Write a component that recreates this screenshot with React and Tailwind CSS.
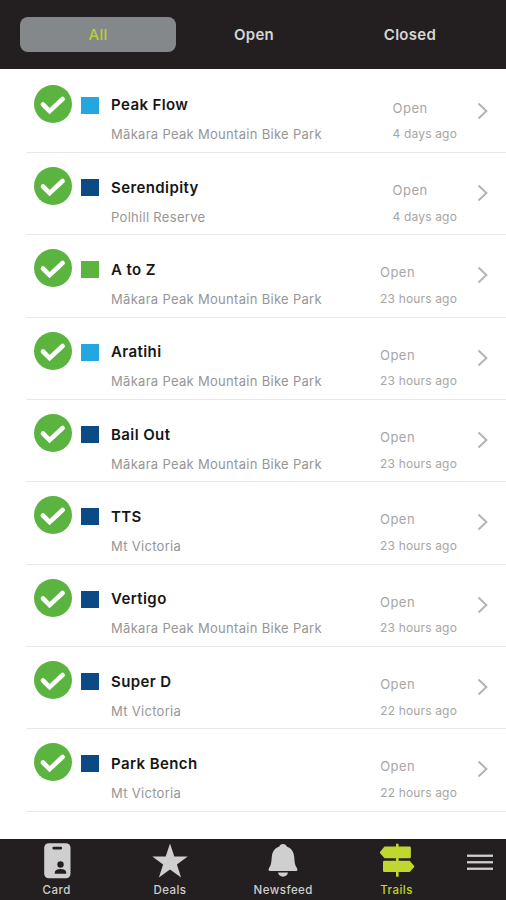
import React, { useState } from 'react'

const TABS = ['All', 'Open', 'Closed']

const GRADES = {
  easy: 'bg-[#5bb440]',
  intermediate: 'bg-[#22a7e0]',
  advanced: 'bg-[#0c4a86]',
}

const MAKARA = 'Mākara Peak Mountain Bike Park'

const TRAILS = [
  { name: 'Peak Flow',   park: MAKARA,            grade: 'intermediate', updated: '4 days ago' },
  { name: 'Serendipity', park: 'Polhill Reserve', grade: 'advanced',     updated: '4 days ago' },
  { name: 'A to Z',      park: MAKARA,            grade: 'easy',         updated: '23 hours ago' },
  { name: 'Aratihi',     park: MAKARA,            grade: 'intermediate', updated: '23 hours ago' },
  { name: 'Bail Out',    park: MAKARA,            grade: 'advanced',     updated: '23 hours ago' },
  { name: 'TTS',         park: 'Mt Victoria',     grade: 'advanced',     updated: '23 hours ago' },
  { name: 'Vertigo',     park: MAKARA,            grade: 'advanced',     updated: '23 hours ago' },
  { name: 'Super D',     park: 'Mt Victoria',     grade: 'advanced',     updated: '22 hours ago' },
  { name: 'Park Bench',  park: 'Mt Victoria',     grade: 'advanced',     updated: '22 hours ago' },
]

function CheckBadge() {
  return (
    <svg className="mt-[14px] h-[38px] w-[38px] shrink-0" viewBox="0 0 38 38">
      <circle cx="19" cy="19" r="19" fill="#5bb440" />
      <path d="M9 19.500l6.600 6.600L28.600 14" fill="none" stroke="#fff" strokeWidth="4.600" strokeLinecap="round" />
    </svg>
  )
}

function Chevron() {
  return (
    <svg className="mt-[31px] h-[18px] w-[12px] shrink-0" viewBox="0 0 12 18">
      <path d="M1.500 1.500L9.400 9L1.500 16.500" fill="none" stroke="#b4b4b6" strokeWidth="2" />
    </svg>
  )
}

function CardIcon() {
  return (
    <svg className="h-9 w-9" viewBox="0 0 36 36" fill="currentColor">
      <rect x="5.200" y="0.300" width="26.300" height="35" rx="4.500" />
      <rect x="13.500" y="3.800" width="9.500" height="2.600" rx="0.800" fill="#231f20" />
      <circle cx="21.500" cy="21.500" r="3.200" fill="#231f20" />
      <path d="M15.800 30.700v-1.200c0-2.200 2-3.600 5.700-3.600s5.700 1.400 5.700 3.600v1.200z" fill="#231f20" />
    </svg>
  )
}

function StarIcon() {
  return (
    <svg className="h-9 w-9" viewBox="0 0 36 36" fill="currentColor">
      <path d="M18 0.500l4.300 13.100h13.400L24.900 21.600l4.200 13L18 26.600l-11.100 8 4.200-13L0.300 13.600h13.400z" />
    </svg>
  )
}

function BellIcon() {
  return (
    <svg className="h-9 w-9" viewBox="0 0 36 36" fill="currentColor">
      <path d="M18 0.900c-1.900 0-3.300 1.100-3.700 2.600C9.800 5 7.200 8.600 6.800 13.800c-.4 6-.9 9-2.700 11.200-.8 1-.7 3 .6 3h26.600c1.300 0 1.400-2 .6-3-1.800-2.200-2.300-5.200-2.700-11.200-.4-5.200-3-8.800-7.500-10.300C21.300 2 19.900.9 18 .9z" />
      <path d="M13 29.600h10c-.4 2.400-2.400 4.100-5 4.100s-4.600-1.700-5-4.100z" />
    </svg>
  )
}

function SignpostIcon() {
  return (
    <svg className="h-9 w-9" viewBox="0 0 36 36" fill="currentColor">
      <rect x="17" y="0.700" width="2.600" height="33" />
      <path d="M5.500 3.600h25.100a1.300 1.300 0 0 1 1.300 1.300v9a1.300 1.300 0 0 1-1.300 1.300H5.500L1 9.900a1 1 0 0 1 0-1z" />
      <path d="M30.700 17.800H5.300A1.300 1.300 0 0 0 4 19.100v8.700a1.300 1.300 0 0 0 1.300 1.300h25.400l4.500-5.200a1 1 0 0 0 0-1z" />
    </svg>
  )
}

function MenuIcon() {
  return (
    <svg className="h-4 w-[26px]" viewBox="0 0 26 16" fill="currentColor">
      <rect x="0" y="0.600" width="26" height="2.300" />
      <rect x="0" y="7.100" width="26" height="2.300" />
      <rect x="0" y="13.600" width="26" height="2.300" />
    </svg>
  )
}

const NAV = [
  { label: 'Card',     icon: CardIcon },
  { label: 'Deals',    icon: StarIcon },
  { label: 'Newsfeed', icon: BellIcon },
  { label: 'Trails',   icon: SignpostIcon },
]

function TrailRow({ trail }) {
  return (
    <li className="flex h-[81.35px] items-start pl-[34px] pr-[17px]">
      <CheckBadge />
      <span className={`ml-[9px] mt-[26px] h-[17px] w-[18px] shrink-0 ${GRADES[trail.grade]}`} />
      <div className="ml-3 flex-1 pt-[24.5px]">
        <div className="text-[15px] font-semibold leading-5 tracking-[0.4px] text-[#161616]">{trail.name}</div>
        <div className="mt-[9px] text-[13px] leading-5 tracking-[0.3px] text-[#969696]">{trail.park}</div>
      </div>
      <div className="mr-[20px] pt-[27px] text-[#a6a6a6]">
        <div className="text-[13px] leading-5 tracking-[0.45px]">Open</div>
        <div className="mt-[6.5px] text-[12px] leading-5 tracking-[0.16px]">{trail.updated}</div>
      </div>
      <Chevron />
    </li>
  )
}

export default function App() {
  const [tab, setTab] = useState('All')
  const trails = tab === 'Closed' ? [] : TRAILS

  return (
    <div className="flex h-[900px] w-[506px] flex-col overflow-hidden bg-white font-['Inter',sans-serif]">
      {/* Filter tabs */}
      <header className="flex h-[69px] shrink-0 items-start bg-[#231f20] pl-5 pr-[18px] pt-[17px]">
        {TABS.map((t) => (
          <button
            key={t}
            onClick={() => setTab(t)}
            className={`h-[35px] flex-1 rounded-lg pt-px text-[15px] tracking-[0.3px] ${
              t === tab ? 'bg-[#85888a] font-medium text-[#b8cf35]' : 'font-semibold text-[#d6d6d6]'
            }`}
          >
            {t}
          </button>
        ))}
      </header>

      {/* Trail list */}
      <main className="flex-1 overflow-hidden pt-[1.7px]">
        <ul>
          {trails.map((trail) => (
            <React.Fragment key={trail.name}>
              <TrailRow trail={trail} />
              <li className="ml-[26px] h-px bg-[#e8e8e8]" />
            </React.Fragment>
          ))}
        </ul>
      </main>

      {/* Bottom navigation */}
      <nav className="flex h-[61px] shrink-0 items-start bg-[#231f20] text-[#cfcfcf]">
        {NAV.map(({ label, icon: Icon }) => (
          <button
            key={label}
            className={`flex w-[113.3px] flex-col items-center pt-1 ${label === 'Trails' ? 'text-[#c0d730]' : ''}`}
          >
            <Icon />
            <span className="mt-[3px] text-[11.5px] font-medium leading-4 tracking-[0.45px]">{label}</span>
          </button>
        ))}
        <button className="ml-[14px] pt-[15px]">
          <MenuIcon />
        </button>
      </nav>
    </div>
  )
}
